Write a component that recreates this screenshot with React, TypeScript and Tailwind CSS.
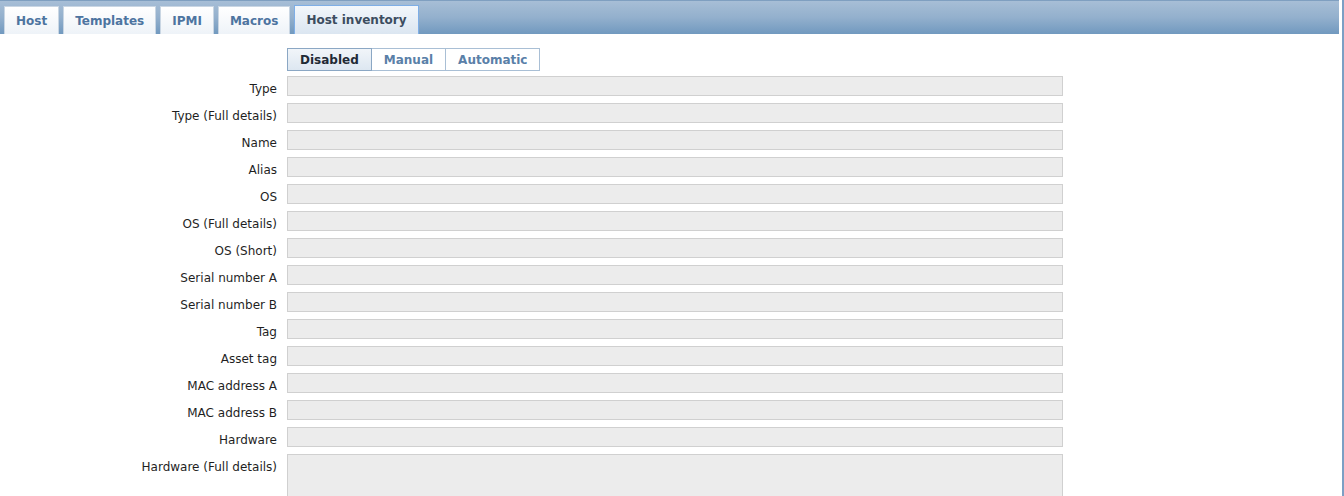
import React from 'react'

const tabs = ['Host', 'Templates', 'IPMI', 'Macros', 'Host inventory']

const fields = [
  'Type',
  'Type (Full details)',
  'Name',
  'Alias',
  'OS',
  'OS (Full details)',
  'OS (Short)',
  'Serial number A',
  'Serial number B',
  'Tag',
  'Asset tag',
  'MAC address A',
  'MAC address B',
  'Hardware',
]

export default function App() {
  return (
    <div className="flex h-[496px] overflow-hidden bg-white font-['DejaVu_Sans',sans-serif]">
      <div className="flex-1">
        {/* Tab bar */}
        <div className="flex h-[34px] items-end gap-1 border-t border-[#7f9fc0] bg-gradient-to-b from-[#a7bed6] via-[#93b0cd] to-[#7199bf] pl-1 mr-[3px]">
          {tabs.map((t, i) => {
            const active = i === tabs.length - 1
            return (
              <div
                key={t}
                className={
                  active
                    ? 'flex h-[29px] items-center border border-b-0 border-[#7eaee6] bg-gradient-to-b from-[#f3f7fb] to-[#dbe6f1] px-[11px] text-[12px] font-bold text-[#3c4d60]'
                    : 'flex h-[28px] items-center border border-b-0 border-[#c9d6e3] bg-gradient-to-b from-white to-[#eef3f8] px-[11px] text-[12px] font-bold text-[#4d74a0]'
                }
              >
                {t}
              </div>
            )
          })}
        </div>

        {/* Form */}
        <div className="mt-[14px] grid grid-cols-[277px_776px] gap-x-[10px] gap-y-[7px]">
          <div />
          <div className="-mb-[2px] flex h-[23px] w-fit">
            <button className="h-full border border-[#8ba7c4] bg-gradient-to-b from-[#f1f5f9] to-[#dde7f1] px-3 text-[12px] font-bold text-[#1f2a35]">
              Disabled
            </button>
            <button className="h-full border border-l-0 border-[#a9bfd5] bg-white px-3 text-[12px] font-bold text-[#5a80a8]">
              Manual
            </button>
            <button className="h-full border border-l-0 border-[#a9bfd5] bg-white px-3 text-[12px] font-bold text-[#5a80a8]">
              Automatic
            </button>
          </div>
          {fields.map((f) => (
            <React.Fragment key={f}>
              <div className="pt-[6px] text-right text-[12px] leading-[14px] text-[#1f1f1f]">{f}</div>
              <div className="h-[20px] border border-[#d0d0d0] bg-[#ececec]" />
            </React.Fragment>
          ))}
          <div className="pt-[6px] text-right text-[12px] leading-[14px] text-[#1f1f1f]">Hardware (Full details)</div>
          <div className="h-[80px] border border-[#d0d0d0] bg-[#ececec]" />
        </div>
      </div>
      <div className="w-[2px] bg-[#7c9fc4]" />
    </div>
  )
}
